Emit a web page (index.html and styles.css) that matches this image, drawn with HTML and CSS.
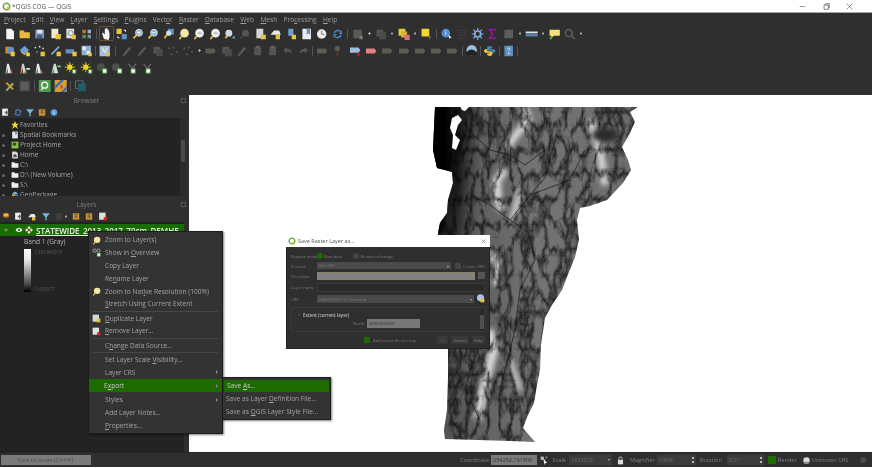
FILE: index.html
```html
<!DOCTYPE html>
<html lang="en">
<head>
<meta charset="utf-8">
<title>*QGIS COG — QGIS</title>
<link rel="stylesheet" href="styles.css">
</head>
<body>
<svg class="defs" width="0" height="0" aria-hidden="true">
  <defs>
    <symbol id="doc" viewBox="0 0 14 14"><path d="M3 1h6l3 3v9H3z" fill="#f4f4f4"/></symbol>
    <symbol id="folder" viewBox="0 0 14 14"><path d="M1 3h5l1 2h6v7H1z" fill="#e9b93f"/></symbol>
    <symbol id="save" viewBox="0 0 14 14"><path d="M2 2h10v10H2z" fill="#7f9fc0"/><path d="M4 2h6v4H4z" fill="#dfe6ee"/><path d="M4 8h6v4H4z" fill="#3f5f80"/></symbol>
    <symbol id="pagey" viewBox="0 0 14 14"><path d="M2 1h8v11H2z" fill="#efe9cf"/><path d="M7 7h6v6H7z" fill="#e9c53a"/></symbol>
    <symbol id="print" viewBox="0 0 14 14"><path d="M2 1h9v11H2z" fill="#e6e6e6"/><circle cx="7" cy="6" r="3" fill="none" stroke="#777"/><path d="M8 8h5v5H8z" fill="#e9c53a"/></symbol>
    <symbol id="style" viewBox="0 0 14 14"><path d="M2 2h4v4H2z" fill="#c9732c"/><path d="M8 2h4v4H8z" fill="#9fb2c4"/><path d="M2 8h4v4H2z" fill="#4f9a4a"/><path d="M8 8h4v4H8z" fill="#7f8f9f"/></symbol>
    <symbol id="hand" viewBox="0 0 14 14"><path d="M4 13 2 7l1-1 2 2V2h1v4-5h1v5-4h1v4-3h1l1 4v4l-1 3z" fill="#f5f5f5"/></symbol>
    <symbol id="move" viewBox="0 0 14 14"><path d="M1 1h6v6H1z" fill="#e9c53a"/><path d="M7 7h6v6H7z" fill="#5f8fc4"/><path d="M9 2h3v3zM2 9v3h3z" fill="#e9e9e9"/></symbol>
    <symbol id="zb" viewBox="0 0 14 14"><circle cx="8.500" cy="5.500" r="4" fill="#8fb6dc" stroke="#dfe8f0"/><path d="M6 8 2 12" stroke="#e6c04a" stroke-width="2"/><path d="M6.500 5.500h4M8.500 3.500v4" stroke="#fff"/></symbol>
    <symbol id="zo" viewBox="0 0 14 14"><circle cx="8.500" cy="5.500" r="4" fill="#8fb6dc" stroke="#dfe8f0"/><path d="M6 8 2 12" stroke="#e6c04a" stroke-width="2"/><path d="M6.500 5.500h4" stroke="#fff"/></symbol>
    <symbol id="zf" viewBox="0 0 14 14"><path d="M6 1h7v7H6z" fill="#5f8fc4"/><circle cx="7" cy="6" r="3" fill="#cfe0ef"/><path d="M5 8 2 12" stroke="#e6c04a" stroke-width="2"/></symbol>
    <symbol id="zy" viewBox="0 0 14 14"><circle cx="8" cy="6" r="5" fill="#f2e8a8"/><path d="M5 9 2 13" stroke="#e6c04a" stroke-width="2"/></symbol>
    <symbol id="zw" viewBox="0 0 14 14"><circle cx="8" cy="6" r="5" fill="#eee"/><path d="M5 9 2 13" stroke="#e6c04a" stroke-width="2"/><path d="M6 6h4" stroke="#888"/></symbol>
    <symbol id="zl" viewBox="0 0 14 14"><circle cx="6" cy="6" r="4" fill="#cfdbe6"/><path d="M4 9 2 12" stroke="#e6c04a" stroke-width="2"/><path d="M13 9l-4 2 4 2z" fill="#5f8fc4"/></symbol>
    <symbol id="zd" viewBox="0 0 14 14"><circle cx="8" cy="6" r="4" fill="#555"/><path d="M5 9 2 12" stroke="#444" stroke-width="2"/></symbol>
    <symbol id="py" viewBox="0 0 14 14"><path d="M2 1h8v11H2z" fill="#cfd6dc"/><path d="M7 8h6v5H7z" fill="#e9c53a"/></symbol>
    <symbol id="ovy" viewBox="0 0 14 14"><path d="M1 8 5 3h6l2 5z" fill="#e8e8e8"/><path d="M7 8h5v5H7z" fill="#e9c53a"/></symbol>
    <symbol id="bb" viewBox="0 0 14 14"><path d="M3 1h6v8H3z" fill="#6f9fd0"/><path d="M7 8h5v5H7z" fill="#e9c53a"/></symbol>
    <symbol id="mark" viewBox="0 0 14 14"><path d="M2 1h10v12H2z" fill="#e8edf2"/><path d="M7 1h4v7L9 6 7 8z" fill="#6f8fb0"/></symbol>
    <symbol id="clock" viewBox="0 0 14 14"><circle cx="7" cy="7" r="5.500" fill="#eee"/><path d="M7 3v4l3 1" stroke="#666" fill="none"/></symbol>
    <symbol id="sync" viewBox="0 0 14 14"><path d="M2 6a5 5 0 0 1 9-2l1-2v5H8l2-2a3.500 3.500 0 0 0-6 1zM12 8a5 5 0 0 1-9 2l-1 2V7h4L4 9a3.500 3.500 0 0 0 6-1z" fill="#3f83c4"/></symbol>
    <symbol id="box" viewBox="0 0 14 14"><path d="M2 2h10v10H2z" fill="#5b5b55"/><path d="M9 9h4v4H9z" fill="#77776a"/></symbol>
    <symbol id="dual" viewBox="0 0 14 14"><path d="M2 2h8v8H2z" fill="#555"/><path d="M5 5h8v8H5z" fill="#4c4c4c"/></symbol>
    <symbol id="ysel" viewBox="0 0 14 14"><path d="M1 1h8v8H1z" fill="#e9c53a"/><path d="M4 4h7v7H4z" fill="#d9b030"/><path d="M8 8h6v6H8z" fill="#d9707a"/></symbol>
    <symbol id="ysq" viewBox="0 0 14 14"><path d="M1 1h9v9H1z" fill="#f0d82c"/><path d="M10 9l2 2-2 2z" fill="#6f8fb0"/></symbol>
    <symbol id="info" viewBox="0 0 14 14"><circle cx="6" cy="6" r="5" fill="#4f8fd0"/><path d="M5.500 3h1v1h-1zM5.500 5h1v3h-1z" fill="#fff"/><path d="M9 8l4 3-2 .5L10 13z" fill="#eee"/></symbol>
    <symbol id="grid" viewBox="0 0 14 14"><path d="M2 3h10M2 6h10M2 9h10M2 12h10" stroke="#4c4c4c" stroke-dasharray="2 1"/></symbol>
    <symbol id="gear" viewBox="0 0 14 14"><circle cx="7" cy="7" r="3.500" fill="none" stroke="#7fb0e0" stroke-width="2"/><path d="M7 0v3M7 11v3M0 7h3M11 7h3M2 2l2 2M10 10l2 2M2 12l2-2M10 4l2-2" stroke="#7fb0e0" stroke-width="1.400"/></symbol>
    <symbol id="sigma" viewBox="0 0 14 14"><path d="M11 2H3l4 5-4 5h8" fill="none" stroke="#a010a0" stroke-width="1.600"/></symbol>
    <symbol id="gray" viewBox="0 0 14 14"><path d="M2 2h10v10H2z" fill="#5d5d5d"/></symbol>
    <symbol id="ruler" viewBox="0 0 14 14"><path d="M0 4h14v2H0z" fill="#dce2e8"/><path d="M0 6h14v4H0z" fill="#5f7f9f"/></symbol>
    <symbol id="tip" viewBox="0 0 14 14"><path d="M1 2h12v7H6l-3 3V9H1z" fill="#f3e27a"/><circle cx="2.500" cy="12" r="1.500" fill="#5aa02c"/></symbol>
    <symbol id="zg" viewBox="0 0 14 14"><circle cx="6" cy="6" r="4" fill="none" stroke="#5a5a5a" stroke-width="2"/><path d="M9 9l4 4" stroke="#5a5a5a" stroke-width="2"/></symbol>
    <symbol id="add1" viewBox="0 0 14 14"><path d="M2 2h8v8H2z" fill="#d88a2a"/><path d="M5 3h7v7H5z" fill="#5f8fc4"/><path d="M8 8h5v5H8z" fill="#e9c53a"/></symbol>
    <symbol id="add2" viewBox="0 0 14 14"><path d="M1 6 7 1l5 5-5 5z" fill="#6f9fd0"/><path d="M3 7l4 4 4-4v2l-4 3-4-3z" fill="#e9c53a"/><path d="M9 9h4v4H9z" fill="#f0d82c"/></symbol>
    <symbol id="add3" viewBox="0 0 14 14"><circle cx="2" cy="3" r="1" fill="#ddd"/><circle cx="7" cy="2" r="1" fill="#ddd"/><circle cx="11" cy="4" r="1" fill="#ddd"/><circle cx="4" cy="8" r="1" fill="#6f9fd0"/><path d="M8 8h5v5H8z" fill="#e9c53a"/></symbol>
    <symbol id="add4" viewBox="0 0 14 14"><path d="M2 11 11 2" stroke="#7fa8d0" stroke-width="2"/><path d="M8 8h5v5H8z" fill="#e9c53a"/></symbol>
    <symbol id="add5" viewBox="0 0 14 14"><path d="M1 5h10v5H1z" fill="#5f8fc4"/><path d="M9 8h5v5H9z" fill="#e9c53a"/></symbol>
    <symbol id="add6" viewBox="0 0 14 14"><path d="M1 1h11v11H1z" fill="#8fb0d0"/><path d="M2 2h4v4H2zM7 7h4v4H7z" fill="#e8eef4"/><path d="M9 9h4v4H9z" fill="#e9c53a"/></symbol>
    <symbol id="add7" viewBox="0 0 14 14"><path d="M1 1h12v12H1z" fill="#a9c1d9"/><path d="M4 3l3 6 3-6" stroke="#fff" fill="none"/><path d="M9 9h4v4H9z" fill="#e9c53a"/></symbol>
    <symbol id="pen" viewBox="0 0 14 14"><path d="M2 12 10 2l2 2-8 9z" fill="#5a5a5a"/></symbol>
    <symbol id="nodes" viewBox="0 0 14 14"><path d="M2 3h2v2H2zM7 2h2v2H7zM11 7h2v2h-2zM5 10h2v2H5z" fill="#5a5a5a"/></symbol>
    <symbol id="clip" viewBox="0 0 14 14"><path d="M3 2h8v10H3z" fill="#555"/><path d="M5 1h4v2H5z" fill="#666"/></symbol>
    <symbol id="undo" viewBox="0 0 14 14"><path d="M2 6l4-4v2.500c4 0 6 2 6 6-1-2-3-3-6-3V10z" fill="#555"/></symbol>
    <symbol id="redo" viewBox="0 0 14 14"><path d="M12 6 8 2v2.500c-4 0-6 2-6 6 1-2 3-3 6-3V10z" fill="#555"/></symbol>
    <symbol id="lab" viewBox="0 0 14 14"><path d="M1 4h10l2 3-2 3H1z" fill="#5c5c50"/></symbol>
    <symbol id="labb" viewBox="0 0 14 14"><path d="M1 3h10l2 3-2 3H1z" fill="#9fc0e0"/><circle cx="11" cy="11" r="2" fill="#d01010"/></symbol>
    <symbol id="labr" viewBox="0 0 14 14"><path d="M1 4h10l2 3-2 3H1z" fill="#e08080"/></symbol>
    <symbol id="pin" viewBox="0 0 14 14"><circle cx="6" cy="4" r="3" fill="#4f5f4f"/><path d="M6 7v6" stroke="#6a3030" stroke-width="2"/></symbol>
    <symbol id="globe" viewBox="0 0 14 14"><circle cx="7" cy="6" r="6" fill="#9fc0e0"/><path d="M1 9c3-5 8-5 12 0l-1 3H2z" fill="#222"/></symbol>
    <symbol id="python" viewBox="0 0 14 14"><path d="M4 6V3c0-2 6-2 6 0v1H7v1h5c2 0 2 4 0 4h-2V7z" fill="#4f86b8"/><path d="M10 8v3c0 2-6 2-6 0v-1h3V9H2C0 9 0 5 2 5h2v2z" fill="#f0cf50"/></symbol>
    <symbol id="help" viewBox="0 0 14 14"><path d="M2 1h10v12H2z" fill="#5f8fc4"/><path d="M5.500 5c0-2 3-2 3 0 0 1-1.500 1-1.500 2.500M6.500 9.500h1v1h-1z" stroke="#fff" fill="none" stroke-width=".8"/></symbol>
    <symbol id="hill" viewBox="0 0 14 14"><path d="M2 13 4 2h2l3 11z" fill="#e8e8e8"/><path d="M2 13h3V7z" fill="#4f9a4a"/><path d="M8 8l3 5H8z" fill="#c05050"/></symbol>
    <symbol id="hillr" viewBox="0 0 14 14"><path d="M2 13 4 2h2l3 11z" fill="#d0d0d0"/><path d="M2 13h3V7z" fill="#b03030"/><path d="M9 7h4v2H9z" fill="#e8e8e8"/><path d="M6 13h3V9z" fill="#4f9a4a"/></symbol>
    <symbol id="hillg" viewBox="0 0 14 14"><path d="M2 13 5 2h2l3 11z" fill="#cfe0cf"/><path d="M2 13h3V8z" fill="#4f9a4a"/><path d="M9 4h4v2H9z" fill="#8c8"/></symbol>
    <symbol id="sun" viewBox="0 0 14 14"><circle cx="6" cy="6" r="3" fill="#f0d820"/><path d="M6 0v12M0 6h12M2 2l8 8M2 10l8-8" stroke="#e8d020"/><path d="M9 9h4v4H9z" fill="#fff" stroke="#3f8f2f"/></symbol>
    <symbol id="gcirc" viewBox="0 0 14 14"><circle cx="6" cy="6" r="4.500" fill="#4e4e4e"/><path d="M8 8h5v5H8z" fill="#fff" stroke="#3f8f2f"/></symbol>
    <symbol id="yshape" viewBox="0 0 14 14"><path d="M2 2l4 5M11 2 7 7M6.500 7v3" stroke="#777" stroke-width="1.200"/><path d="M5 8h5v5H5z" fill="#fff" stroke="#3f8f2f"/></symbol>
    <symbol id="tool" viewBox="0 0 14 14"><path d="M2 12 10 3l2 2-8 8z" fill="#8fa86f"/><path d="M3 3l8 8" stroke="#d8a030" stroke-width="2"/></symbol>
    <symbol id="dbox" viewBox="0 0 14 14"><path d="M1 1h12v12H1z" fill="#4e4e4e"/><path d="M3 3h8v8H3z" fill="#5c5c5c"/></symbol>
    <symbol id="gfind" viewBox="0 0 14 14"><path d="M0 0h14v14H0z" fill="#4f9a4a"/><circle cx="7" cy="6" r="3.500" fill="none" stroke="#fff" stroke-width="1.400"/><path d="M5 9l-2 3" stroke="#fff" stroke-width="1.400"/></symbol>
    <symbol id="mosaic" viewBox="0 0 14 14"><path d="M0 0h14v14H0z" fill="#d9a030"/><path d="M0 7 7 0h4L0 11zM7 14l7-7v4l-3 3z" fill="#3f6fb0"/><path d="M7 5l3 3-3 3z" fill="#c04040"/></symbol>
    <symbol id="tealbox" viewBox="0 0 14 14"><path d="M1 1h9v9H1z" fill="none" stroke="#5a7a80"/><path d="M4 4h9v9H4z" fill="#1f5f66"/></symbol>
    <symbol id="add" viewBox="0 0 14 14"><path d="M1 1h9v11H1z" fill="#eee"/><path d="M5 6h2V4h2v2h2v2H9v2H7V8H5z" fill="#666"/></symbol>
    <symbol id="funnel" viewBox="0 0 14 14"><path d="M1 2h12L8 8v5H6V8z" fill="#6fb6d8"/></symbol>
    <symbol id="exp" viewBox="0 0 14 14"><path d="M2 2h10v10H2z" fill="#c89030"/><path d="M5 4h4v1H5zM5 7h4v1H5z" fill="#234"/></symbol>
    <symbol id="circi" viewBox="0 0 14 14"><circle cx="7" cy="7" r="5" fill="#5f9fe0"/><path d="M6.500 4h1v1h-1zM6.500 6h1v4h-1z" fill="#fff"/></symbol>
    <symbol id="styl" viewBox="0 0 14 14"><path d="M2 6a5 5 0 0 1 10 0c0 4-10 4-10 0z" fill="#c87a2a"/><path d="M4 3h6v3H4z" fill="#e9c53a"/></symbol>
    <symbol id="eye" viewBox="0 0 14 14"><path d="M1 7c3-5 9-5 12 0-3 5-9 5-12 0z" fill="#eee"/><circle cx="7" cy="7" r="2" fill="#1d6b00"/></symbol>
    <symbol id="rast" viewBox="0 0 14 14"><path d="M7 0l3 3-3 3-3-3zM3 4l3 3-3 3-3-3zM11 4l3 3-3 3-3-3zM7 8l3 3-3 3-3-3z" fill="#e3d9cc"/><circle cx="7" cy="7" r="1.500" fill="#b03020"/></symbol>
    <symbol id="star" viewBox="0 0 14 14"><path d="M7 0l2 5h5l-4 3 2 6-5-4-5 4 2-6-4-3h5z" fill="#f4d81e"/></symbol>
    <symbol id="mk2" viewBox="0 0 14 14"><path d="M2 1h10v12H2z" fill="#dfe6ee"/><path d="M7 1h4v6L9 5 7 7z" fill="#6f8fb0"/></symbol>
    <symbol id="home" viewBox="0 0 14 14"><path d="M2 1h7l3 3v9H2z" fill="#ddd"/><path d="M4 8l3-3 3 3v3H4z" fill="#555"/></symbol>
    <symbol id="proj" viewBox="0 0 14 14"><path d="M1 1h12v12H1z" fill="#8fc040"/><path d="M3 3h6v5H3z" fill="#2f4f20"/></symbol>
    <symbol id="dir" viewBox="0 0 14 14"><path d="M1 2h5l1 2h6v8H1z" fill="#efefef"/></symbol>
    <symbol id="gpkg" viewBox="0 0 14 14"><path d="M7 1l5 3-5 3-5-3z" fill="#7fb0e0"/><path d="M2 5l5 3v5l-5-3z" fill="#e9c53a"/><path d="M12 5 7 8v5l5-3z" fill="#4f7fb0"/></symbol>
    <symbol id="lens" viewBox="0 0 14 14"><circle cx="7" cy="7" r="5" fill="#ddd"/><path d="M3 9h8v3H3z" fill="#889"/></symbol>
    <symbol id="lock" viewBox="0 0 14 14"><path d="M3 6h8v7H3z" fill="#ddd"/><path d="M4.500 6V4a2.500 2.500 0 0 1 5 0v2" fill="none" stroke="#ddd" stroke-width="1.300"/></symbol>
    <symbol id="msg" viewBox="0 0 14 14"><path d="M2 6a5 4 0 1 1 3 4l-3 2 1-3z" fill="#4c4c4c"/></symbol>
    <symbol id="cur" viewBox="0 0 14 14"><path d="M1 1h5v5H1z" fill="#bbb"/><path d="M5 3l6 8-2.500 0L7 14z" fill="#eee"/><path d="M8 2h4M10 0v4" stroke="#999"/></symbol>
    <symbol id="showov" viewBox="0 0 14 14"><circle cx="4" cy="4" r="2.500" fill="none" stroke="#ddd"/><circle cx="10" cy="4" r="2.500" fill="none" stroke="#ddd"/><path d="M8 8h5v5H8z" fill="#fff" stroke="#3f8f2f"/></symbol>
    <symbol id="dup" viewBox="0 0 14 14"><path d="M1 1h10v11H1z" fill="#d0d8e0"/><path d="M7 7h6v6H7z" fill="#e9c53a"/></symbol>
    <symbol id="rem" viewBox="0 0 14 14"><path d="M1 1h10v11H1z" fill="#e2e2e2"/><path d="M8 8h5v5H8z" fill="#e02020"/></symbol>
    <symbol id="gadd" viewBox="0 0 14 14"><circle cx="7" cy="6" r="5.500" fill="#a9c6e4"/><path d="M7 7h6v6H7z" fill="#e9c53a"/></symbol>
  </defs>
</svg>

<div class="app">
  <header class="titlebar">
    <svg class="logo" viewBox="0 0 14 14"><circle cx="7" cy="7" r="5" fill="none" stroke="#6aa83a" stroke-width="2.400"/><path d="M8 8l4 5" stroke="#e0b030" stroke-width="2.400"/></svg>
    <span class="title">*QGIS COG — QGIS</span>
    <div class="winbtns">
      <svg viewBox="0 0 10 10"><path d="M1 5h8" stroke="#777"/></svg>
      <svg viewBox="0 0 10 10"><path d="M1.500 3h6v6h-6zM3.500 3V1h5.500v6H7.500" fill="none" stroke="#555"/></svg>
      <svg viewBox="0 0 10 10"><path d="M1 1l8 8M9 1 1 9" stroke="#666"/></svg>
    </div>
  </header>

  <nav class="menubar">
    <span><u>P</u>roject</span><span><u>E</u>dit</span><span><u>V</u>iew</span><span><u>L</u>ayer</span><span><u>S</u>ettings</span><span><u>P</u>lugins</span><span>Vect<u>o</u>r</span><span><u>R</u>aster</span><span><u>D</u>atabase</span><span><u>W</u>eb</span><span><u>M</u>esh</span><span>Pro<u>c</u>essing</span><span><u>H</u>elp</span>
  </nav>

  <section class="toolbars">
    <div class="tb">
      <svg class="i"><use href="#doc"/></svg><svg class="i"><use href="#folder"/></svg><svg class="i"><use href="#save"/></svg><svg class="i"><use href="#pagey"/></svg><svg class="i"><use href="#print"/></svg><svg class="i"><use href="#style"/></svg><i class="sep"></i>
      <svg class="i on"><use href="#hand"/></svg><svg class="i"><use href="#move"/></svg><svg class="i"><use href="#zb"/></svg><svg class="i"><use href="#zo"/></svg><svg class="i"><use href="#zf"/></svg><svg class="i"><use href="#zy"/></svg><svg class="i"><use href="#zw"/></svg><svg class="i"><use href="#zw"/></svg><svg class="i"><use href="#zl"/></svg><svg class="i"><use href="#zd"/></svg><svg class="i"><use href="#py"/></svg><svg class="i"><use href="#ovy"/></svg><svg class="i"><use href="#bb"/></svg><svg class="i"><use href="#mark"/></svg><svg class="i"><use href="#clock"/></svg><svg class="i"><use href="#sync"/></svg><i class="sep"></i>
      <svg class="i"><use href="#box"/></svg><b class="dot"></b><svg class="i"><use href="#dual"/></svg><b class="dot"></b><svg class="i"><use href="#ysel"/></svg><b class="dot"></b><svg class="i"><use href="#ysq"/></svg><i class="sep"></i>
      <svg class="i"><use href="#info"/></svg><svg class="i"><use href="#grid"/></svg><svg class="i"><use href="#gear"/></svg><svg class="i"><use href="#sigma"/></svg><svg class="i"><use href="#gray"/></svg><b class="dot"></b><svg class="i"><use href="#ruler"/></svg><b class="dot"></b><svg class="i"><use href="#tip"/></svg><svg class="i"><use href="#zg"/></svg><b class="dot"></b>
    </div>
    <div class="tb">
      <svg class="i"><use href="#add1"/></svg><svg class="i"><use href="#add2"/></svg><svg class="i"><use href="#add3"/></svg><svg class="i"><use href="#add4"/></svg><svg class="i"><use href="#add5"/></svg><svg class="i"><use href="#add6"/></svg><i class="sep s3"></i><svg class="i"><use href="#add7"/></svg><i class="sep s7"></i>
      <svg class="i"><use href="#pen"/></svg><svg class="i"><use href="#pen"/></svg><svg class="i"><use href="#dual"/></svg><svg class="i"><use href="#nodes"/></svg><svg class="i"><use href="#nodes"/></svg><b class="dot"></b><svg class="i"><use href="#lab"/></svg><svg class="i"><use href="#dual"/></svg><svg class="i"><use href="#pen"/></svg><svg class="i"><use href="#clip"/></svg><svg class="i"><use href="#clip"/></svg><svg class="i"><use href="#undo"/></svg><svg class="i"><use href="#redo"/></svg><i class="sep s3"></i>
      <svg class="i wd"><use href="#lab"/></svg><svg class="i wd"><use href="#pin"/></svg><svg class="i wd"><use href="#labb"/></svg><svg class="i wd"><use href="#labr"/></svg><svg class="i wd"><use href="#lab"/></svg><svg class="i wd"><use href="#lab"/></svg><svg class="i wd"><use href="#lab"/></svg><svg class="i wd"><use href="#lab"/></svg><svg class="i wd"><use href="#lab"/></svg><i class="sep s3"></i>
      <svg class="i"><use href="#globe"/></svg><i class="sep s3"></i><svg class="i"><use href="#python"/></svg><i class="sep s3"></i><svg class="i"><use href="#help"/></svg><i class="sep s3"></i>
    </div>
    <div class="tb tall">
      <svg class="i"><use href="#hill"/></svg><svg class="i"><use href="#hillr"/></svg><svg class="i"><use href="#hill"/></svg><svg class="i"><use href="#hillg"/></svg><svg class="i"><use href="#sun"/></svg><svg class="i"><use href="#sun"/></svg><svg class="i"><use href="#gcirc"/></svg><svg class="i"><use href="#gcirc"/></svg><svg class="i"><use href="#yshape"/></svg><svg class="i"><use href="#yshape"/></svg>
    </div>
    <div class="tb tall">
      <svg class="i"><use href="#tool"/></svg><svg class="i"><use href="#dbox"/></svg><i class="sep"></i><svg class="i"><use href="#gfind"/></svg><svg class="i"><use href="#mosaic"/></svg><i class="sep"></i><svg class="i"><use href="#tealbox"/></svg>
    </div>
  </section>

  <main class="main">
    <aside class="dock">
      <div class="panel browser">
        <div class="phead"><span>Browser</span><b class="float"></b></div>
        <div class="ptools">
          <svg class="p"><use href="#add"/></svg><svg class="p"><use href="#sync"/></svg><svg class="p"><use href="#funnel"/></svg><svg class="p"><use href="#exp"/></svg><svg class="p"><use href="#circi"/></svg>
        </div>
        <div class="btree">
          <ul class="tree">
            <li><i class="arrow none"></i><svg class="t"><use href="#star"/></svg>Favorites</li>
            <li><i class="arrow"></i><svg class="t"><use href="#mk2"/></svg>Spatial Bookmarks</li>
            <li><i class="arrow"></i><svg class="t"><use href="#proj"/></svg>Project Home</li>
            <li><i class="arrow"></i><svg class="t"><use href="#home"/></svg>Home</li>
            <li><i class="arrow"></i><svg class="t"><use href="#dir"/></svg>C:\</li>
            <li><i class="arrow"></i><svg class="t"><use href="#dir"/></svg>D:\ (New Volume)</li>
            <li><i class="arrow"></i><svg class="t"><use href="#dir"/></svg>S:\</li>
            <li><i class="arrow"></i><svg class="t"><use href="#gpkg"/></svg>GeoPackage</li>
          </ul>
          <div class="vscroll"><b></b></div>
        </div>
      </div>
      <div class="panel layers">
        <div class="phead"><span>Layers</span><b class="float"></b></div>
        <div class="ptools lt">
          <svg class="p"><use href="#styl"/></svg><svg class="p"><use href="#add"/></svg><svg class="p"><use href="#ovy"/></svg><svg class="p"><use href="#funnel"/></svg><svg class="p dimmed"><use href="#gray"/></svg><b class="dot"></b><svg class="p"><use href="#exp"/></svg><svg class="p"><use href="#exp"/></svg><svg class="p"><use href="#rem"/></svg>
        </div>
        <div class="ltree">
          <div class="lrow"><i class="arrow open"></i><svg class="e"><use href="#eye"/></svg><svg class="e"><use href="#rast"/></svg><span class="lname">STATEWIDE_2013_2017_70cm_DEMHF</span></div>
          <div class="band">Band 1 (Gray)</div>
          <div class="ramp">
            <div class="rampbar"></div>
            <div class="ramplabels"><span>1,339.841919</span><span>-1.603877</span></div>
          </div>
        </div>
      </div>
    </aside>

    <div class="map">
      <svg class="vt" viewBox="189 95 683 357" aria-hidden="true">
        <defs>
          <clipPath id="vtclip"><path d="M435 107H638L630 112L635 122L630 133L622 147L628 160L631 170L623 183L607 200L590 206L580 208L577 220L579 240L575 257L567 277L562 290L552 305L545 318L541 345L540 370L537 385L534 403L527 417L523 428L535 442L510 441L445 439L444 430L447 410L448 377L448 350L440 300L438 233L440 223L447 213L448 200L453 183L452 172L445 170L437 168L433 150Z"/></clipPath>
          <linearGradient id="vtg" x1="0" y1="0" x2="1" y2="0"><stop offset="0" stop-color="#4c4c4c"/><stop offset=".5" stop-color="#747474"/><stop offset="1" stop-color="#6c6c6c"/></linearGradient>
          <filter id="dem" x="0" y="0" width="100%" height="100%" color-interpolation-filters="sRGB">
            <feTurbulence type="turbulence" baseFrequency=".09 .04" numOctaves="4" seed="11" result="n"/>
            <feColorMatrix in="n" type="matrix" values="1.800 0 0 0 .22  1.800 0 0 0 .22  1.800 0 0 0 .22  0 0 0 0 1" result="g"/>
            <feBlend in="SourceGraphic" in2="g" mode="multiply"/>
          </filter>
          <filter id="sb" x="-30%" y="-30%" width="160%" height="160%"><feGaussianBlur stdDeviation="9"/></filter>
          <filter id="sb2" x="-30%" y="-30%" width="160%" height="160%"><feGaussianBlur stdDeviation="2.500"/></filter>
          <filter id="sb3" x="-10%" y="-10%" width="120%" height="120%"><feGaussianBlur stdDeviation=".5"/></filter>
        </defs>
        <g clip-path="url(#vtclip)">
          <g filter="url(#dem)">
            <rect x="425" y="100" width="220" height="350" fill="url(#vtg)"/>
            <g fill="none" stroke="#fff" filter="url(#sb2)" opacity=".75">
              <path d="M525 108L528 120L512 140L505 150" stroke-width="7"/>
              <path d="M505 170L497 180L498 200L502 210" stroke-width="8"/>
              <path d="M520 190L515 210L510 225" stroke-width="5"/>
              <path d="M490 250L497 265L495 285" stroke-width="6"/>
              <path d="M590 120L600 150L605 185" stroke-width="7"/>
              <path d="M488 330L495 345L482 395L478 420" stroke-width="9"/>
              <path d="M510 360L520 390" stroke-width="4"/>
            </g>
          </g>
          <path d="M425 100H448L450 170L443 235H425Z" fill="#000" filter="url(#sb2)"/>
          <path d="M438 100H470L466 170L458 245L444 262Z" fill="#000" opacity=".85" filter="url(#sb)"/>
          <g fill="none" stroke="#0a0a0a" stroke-width="1" filter="url(#sb3)" opacity=".6">
            <path d="M470 195L490 205L510 220L528 232"/>
            <path d="M510 220L530 195L545 178L555 140"/>
            <path d="M530 195L570 180L585 150"/>
            <path d="M528 232L535 260L520 290L515 330L500 390"/>
            <path d="M468 130L490 150L510 155L525 165L545 150"/>
            <path d="M480 420L465 390L470 370L478 350"/>
          </g>
          <ellipse cx="605" cy="135" rx="13" ry="7" fill="#2a2a2a" filter="url(#sb2)"/>
        </g>
        <path class="lake" d="M452 118L458 115L462 120L458 125L455 135L460 140L456 150L452 148L453 135L450 128ZM460 106H470L465 111L462 110Z"/>
      </svg>
    </div>
  </main>

  <footer class="status">
    <div class="locator">Type to locate (Ctrl+K)</div>
    <div class="sright">
      <span>Coordinate</span><span class="coord">254252,191909</span><svg class="s s-cur"><use href="#cur"/></svg>
      <span class="m-scale">Scale</span><span class="combo c-scale">1632372<b class="caret"></b></span><svg class="s s-lock"><use href="#lock"/></svg>
      <span>Magnifier</span><span class="combo c-mag">100%<b class="spin"></b></span>
      <span class="m-rot">Rotation</span><span class="combo c-rot">0.0 °<b class="spin"></b></span>
      <i class="rcheck"></i><span class="m-render">Render</span><svg class="s s-crs"><use href="#lens"/></svg><span class="m-crs">Unknown CRS</span><svg class="s s-msg"><use href="#msg"/></svg>
    </div>
  </footer>

  <div class="menu ctx">
    <div class="mi"><svg class="mic"><use href="#zy"/></svg><span>Zoom to Layer(s)</span></div>
    <div class="mi"><svg class="mic"><use href="#showov"/></svg><span>Show in <u>O</u>verview</span></div>
    <div class="mi"><span>Copy Layer</span></div>
    <div class="mi"><span>Re<u>n</u>ame Layer</span></div>
    <div class="mi"><svg class="mic"><use href="#zy"/></svg><span>Zoom to Nat<u>i</u>ve Resolution (100%)</span></div>
    <div class="mi"><span><u>S</u>tretch Using Current Extent</span></div>
    <hr class="msep">
    <div class="mi"><svg class="mic"><use href="#dup"/></svg><span><u>D</u>uplicate Layer</span></div>
    <div class="mi"><svg class="mic"><use href="#rem"/></svg><span><u>R</u>emove Layer…</span></div>
    <hr class="msep">
    <div class="mi"><span>C<u>h</u>ange Data Source…</span></div>
    <hr class="msep">
    <div class="mi"><span>Set Layer Scale <u>V</u>isibility…</span></div>
    <div class="mi sub"><span>Layer CRS</span></div>
    <div class="mi sub sel"><span>E<u>x</u>port</span></div>
    <div class="mi sub"><span>Styles</span></div>
    <div class="mi"><span>Add Layer Notes…</span></div>
    <div class="mi"><span><u>P</u>roperties…</span></div>
  </div>

  <div class="menu submenu">
    <div class="mi sel"><span>Save <u>A</u>s…</span></div>
    <div class="mi"><span>Save as Layer <u>D</u>efinition File…</span></div>
    <div class="mi"><span>Save as <u>Q</u>GIS Layer Style File…</span></div>
  </div>

  <div class="dialog">
    <div class="dtitle">
      <svg class="dlogo" viewBox="0 0 14 14"><circle cx="7" cy="7" r="5" fill="none" stroke="#6aa83a" stroke-width="2.400"/><path d="M8 8l4 5" stroke="#e0b030" stroke-width="2.400"/></svg>
      <span>Save Raster Layer as...</span>
      <svg class="dclose" viewBox="0 0 10 10"><path d="M1 1l8 8M9 1 1 9" stroke="#555"/></svg>
    </div>
    <div class="dbody">
      <div class="drow r-mode"><label>Output mode</label><i class="radio on"></i><span>Raw data</span><i class="radio"></i><span>Rendered image</span></div>
      <div class="drow r-fmt"><label>Format</label><span class="dcombo f1">GeoTIFF<b class="caret"></b></span><i class="dchk"></i><span>Create VRT</span></div>
      <div class="drow r-file"><label>File name</label><span class="dinput file"></span><i class="dbtn"></i></div>
      <div class="drow r-lay"><label>Layer name</label><span class="dinput lay"></span></div>
      <div class="drow r-crs"><label>CRS</label><span class="dcombo f2">NAD83(2011) / Vermont<b class="caret"></b></span><svg class="dglobe"><use href="#gadd"/></svg></div>
      <div class="dgroup">
        <div class="gmain">
          <div class="gtitle"><b class="tri"></b>Extent (current layer)</div>
          <div class="gnorth"><span>North</span><span class="dval">280000.0000</span></div>
        </div>
        <div class="gscroll"><b></b></div>
      </div>
      <div class="dfoot">
        <i class="greenchk"></i><span>Add saved file to map</span>
        <span class="dspace"></span>
        <span class="pbtn ok">OK</span><span class="pbtn">Cancel</span><span class="pbtn">Help</span>
      </div>
    </div>
  </div>
</div>
</body>
</html>
```

FILE: styles.css
```css
* { box-sizing: border-box; }
html, body { margin: 0; padding: 0; background: #fff; overflow: hidden; }
.defs { position: absolute; }
.app {
  position: relative; width: 872px; height: 468px; display: flex; flex-direction: column;
  font-family: "Open Sans", "Noto Sans", sans-serif; font-size: 6.600px; color: #a9a9a9;
  background: #fff; filter: blur(.4px); overflow: hidden;
}
u { text-underline-offset: 1px; text-decoration-thickness: .5px; }

.titlebar { height: 13px; flex: none; display: flex; align-items: center; padding-left: 1px; background: #fff; border-bottom: 1px solid #a8a8a8; color: #555; font-size: 6.500px; }
.logo { width: 9px; height: 9px; margin: 0 1px 0 1px; }
.title { flex: 1; }
.winbtns { display: flex; gap: 16.500px; padding-right: 19px; }
.winbtns svg { width: 7px; height: 7px; }

.menubar { height: 12px; flex: none; display: flex; align-items: center; gap: 6.300px; padding-left: 4px; background: #2f2f2f; font-size: 6.600px; color: #9d9d9d; }

.toolbars { flex: none; height: 70px; background: #2f2f2f; }
.tb { height: 17px; display: flex; align-items: center; padding-left: 1.600px; }
.tb.tall { height: 18px; }
.i { width: 15.400px; height: 12px; flex: none; }
.i.wd { width: 16.300px; }
.i.on { height: 15px; border: 1px solid #6b4f2c; border-radius: 1px; }
.sep { width: 5px; height: 10px; flex: none; background: linear-gradient(#555, #555) center / 1px 100% no-repeat; }
.sep.s3 { width: 3px; }
.sep.s7 { width: 6.600px; }
.dot { width: 7.500px; height: 3px; flex: none; background: radial-gradient(circle, #aaa 0 1px, transparent 1.200px); }

.main { flex: 1; min-height: 0; display: flex; background: #2f2f2f; }
.dock { width: 189px; flex: none; display: flex; flex-direction: column; }
.panel { display: flex; flex-direction: column; }
.browser { height: 104px; padding-bottom: 3px; }
.layers { flex: 1; min-height: 0; }
.phead { height: 11px; flex: none; display: flex; align-items: center; justify-content: center; position: relative; margin-right: 16px; color: #7f7f7f; font-size: 6.600px; }
.float { position: absolute; right: -13px; top: 3px; width: 5px; height: 5px; border: 1px solid #555; }
.ptools { height: 12px; flex: none; display: flex; align-items: center; padding-left: 1px; gap: 2px; }
.p { width: 10px; height: 9px; flex: none; }
.ptools.lt { gap: 3.200px; padding-left: 1px; }
.p.dimmed { opacity: .35; }
.ptools .dot { width: 4px; margin-left: -3px; }
.btree { flex: 1; min-height: 0; display: flex; background: #232323; margin-right: 3px; overflow: hidden; }
.tree { list-style: none; margin: 0; padding: 2px 0 0; flex: 1; }
.tree li { height: 10px; display: flex; align-items: center; color: #a6a6a6; font-size: 6.500px; line-height: 10px; white-space: nowrap; }
.arrow { width: 3px; height: 3px; flex: none; margin: 0 6px 0 2px; border-radius: 50%; background: #666; }
.arrow.none { background: none; }
.arrow.open { margin: 0 7px 0 4px; background: none; border-top: 3px solid #888; border-left: 2px solid transparent; border-right: 2px solid transparent; border-radius: 0; width: 4px; height: 0; }
.t { width: 8px; height: 8px; margin-right: 1px; flex: none; }
.vscroll { width: 6px; flex: none; background: #2b2b2b; padding: 0 1px; }
.vscroll b { display: block; height: 22px; margin-top: 22px; background: #4a4a4a; }

.ltree { flex: 1; min-height: 0; background: #232323; margin-right: 5px; padding-top: 2px; overflow: hidden; }
.lrow { height: 12px; display: flex; align-items: center; background: #186c04; color: #eaf2e6; font-size: 8px; font-weight: 600; white-space: nowrap; overflow: hidden; }
.lname { text-decoration: underline; text-underline-offset: 1px; text-decoration-thickness: .5px; margin-left: 1px; }
.e { width: 8px; height: 8px; flex: none; margin-right: 2px; }
.band { padding: 1px 0 0 24px; height: 13px; font-size: 6.600px; color: #b5b5b5; }
.ramp { display: flex; margin-left: 24px; height: 43px; }
.rampbar { width: 7px; height: 43px; background: linear-gradient(#fff, #e8e8e8 25%, #555 78%, #000); }
.ramplabels { margin-left: 3px; display: flex; flex-direction: column; justify-content: space-between; font-size: 4.500px; color: #5c5c5c; }

.map { flex: 1; min-width: 0; position: relative; background: #fff; }
.vt { position: absolute; inset: 0; width: 683px; height: 357px; }
.lake { fill: #fff; }

.status { height: 15px; flex: none; margin-bottom: 1px; display: flex; align-items: center; background: #2f2f2f; border-top: 1px solid #262626; font-size: 5.600px; color: #7f7f7f; }
.locator { width: 90px; height: 10px; margin-left: 1px; padding-left: 16px; background: #7b7b7b; color: #4c4c4c; font-size: 5.500px; line-height: 10px; }
.sright { flex: 1; display: flex; align-items: center; padding-left: 369px; white-space: nowrap; }
.coord { width: 46px; height: 10px; margin-left: 2px; background: #7b7b7b; color: #333; line-height: 10px; padding-left: 2px; font-size: 5.500px; }
.s { width: 9px; height: 9px; flex: none; }
.s-cur { margin: 0 3.500px 0 3px; }
.combo { position: relative; height: 10px; line-height: 10px; background: #3c3c3c; color: #6f6f6f; padding-left: 2px; margin-left: 3px; flex: none; font-size: 5.500px; }
.c-scale { width: 43px; }
.c-mag { width: 39px; margin-left: 2px; }
.c-rot { width: 37px; margin-left: 5px; }
.caret { position: absolute; right: 2px; top: 4px; border-top: 2px solid #aaa; border-left: 1.500px solid transparent; border-right: 1.500px solid transparent; }
.spin { position: absolute; right: 2px; top: 2px; width: 2px; height: 6px; background: linear-gradient(#bbb 0 2px, transparent 2px 4px, #bbb 4px); }
.s-lock { margin: 0 4.500px; }
.m-rot { margin-left: 4px; }
.rcheck { width: 8px; height: 8px; margin: 0 2px 0 4px; flex: none; background: #1d6b00; }
.s-crs { margin: 0 1px 0 5px; }
.s-msg { margin-left: 11px; }

.menu { position: absolute; background: #333; border: 1px solid #1c1c1c; box-shadow: 1px 1px 2px rgba(0, 0, 0, .5); padding: 1.600px 0; color: #a3a3a3; font-size: 6.600px; z-index: 3; }
.ctx { left: 88px; top: 231px; width: 135px; height: 203px; }
.submenu { left: 222px; top: 377px; width: 109px; height: 43px; }
.mi { position: relative; height: 12.800px; display: flex; align-items: center; padding-left: 16px; white-space: nowrap; }
.submenu .mi { padding-left: 3px; }
.mi.sel { background: #1d6b00; color: #c8c8c8; margin: 0 1px; }
.ctx .mi.sel { padding-left: 15px; margin: 1px 0; }
.mi.sub::after { content: ""; position: absolute; right: 4px; top: 4.500px; border-left: 2.500px solid #888; border-top: 2px solid transparent; border-bottom: 2px solid transparent; }
.mic { position: absolute; left: 3px; top: 2px; width: 9px; height: 9px; }
.msep { border: 0; height: 1px; background: #484848; margin: .2px 4px; }

.dialog { position: absolute; left: 285px; top: 235px; width: 205px; z-index: 2; display: flex; flex-direction: column; font-size: 4.300px; color: #7c7c7c; }
.dtitle { height: 12px; display: flex; align-items: center; background: #fff; color: #555; font-size: 5.500px; padding-left: 3px; }
.dlogo { width: 8px; height: 8px; margin-right: 2px; }
.dtitle span { flex: 1; }
.dclose { width: 5px; height: 5px; margin-right: 4px; }
.dbody { margin-left: 1px; height: 102px; background: #2f2f2f; padding: 4px 4px 0; display: flex; flex-direction: column; border: 1px solid #222; border-top: 0; }
.drow { display: flex; align-items: center; white-space: nowrap; }
.drow label { width: 26px; flex: none; }
.r-mode { height: 10px; }
.radio { width: 6px; height: 6px; flex: none; border-radius: 50%; background: #444; margin: 0 1px 0 11px; }
.radio.on { background: #1d6b00; margin-left: 0; }
.r-fmt { height: 10px; }
.dcombo { position: relative; height: 7px; line-height: 7px; padding-left: 2px; background: #4a4a4a; color: #797979; }
.f1 { width: 137px; }
.f2 { width: 157px; height: 8px; line-height: 8px; }
.dchk { width: 6px; height: 6px; margin: 0 2px 0 4px; background: #444; }
.r-file { height: 11px; }
.dinput { height: 8px; display: block; }
.file { width: 158px; background: #808080; border: 1px solid #8f7f63; }
.dbtn { width: 7px; height: 7px; margin-left: 3px; background: #555; }
.r-lay { height: 12px; }
.lay { width: 169px; height: 9px; background: #2a2a2a; border: 1px solid #3a3a3a; }
.r-crs { height: 12px; }
.dglobe { width: 9px; height: 9px; margin-left: 2px; }
.dgroup { display: flex; height: 26px; margin-top: 2px; border: 1px solid #3a3a3a; border-radius: 2px; width: 195px; }
.gmain { flex: 1; }
.gtitle { padding: 3px 0 0 6px; height: 11px; font-weight: 700; color: #a8a8a8; display: flex; align-items: center; gap: 3px; }
.tri { border-top: 2px solid #555; border-left: 1.500px solid transparent; border-right: 1.500px solid transparent; }
.gnorth { display: flex; align-items: center; padding-left: 61px; gap: 2px; }
.dval { width: 53px; height: 9px; line-height: 9px; background: #777; color: #333; padding-left: 2px; }
.gscroll { width: 4px; margin: 0 1px 0 0; background: #2a2a2a; }
.gscroll b { display: block; height: 14px; margin-top: 7px; background: #4f4f4f; }
.dfoot { height: 16px; display: flex; align-items: center; padding-left: 73px; gap: 3px; color: #797979; }
.greenchk { width: 6px; height: 6px; background: #1d6b00; }
.dspace { flex: 1; }
.pbtn { height: 8px; line-height: 8px; padding: 0 2px; border-radius: 1px; background: #383838; color: #8a8a8a; }
.pbtn.ok { width: 11px; color: #555; }
```
